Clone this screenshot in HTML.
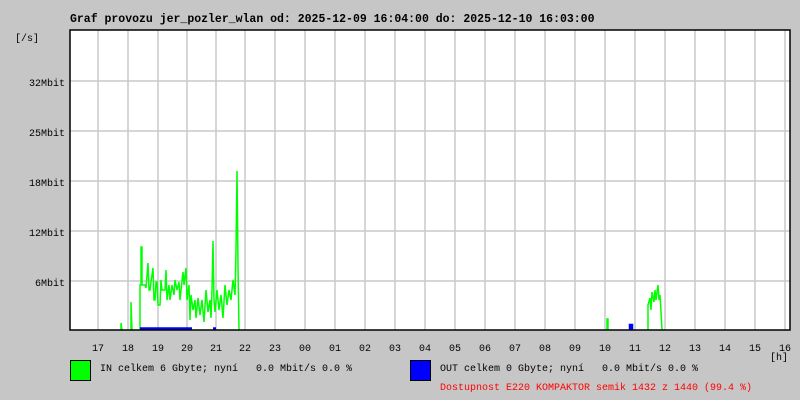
<!DOCTYPE html>
<html><head><meta charset="utf-8"><style>
body{margin:0;background:#c6c6c6;width:800px;height:400px;overflow:hidden;font-family:"Liberation Mono",monospace;}
text{white-space:pre;}
</style></head><body>
<svg width="800" height="400" xmlns="http://www.w3.org/2000/svg" style="position:absolute;left:0;top:0" font-family="Liberation Mono, monospace" font-size="10">
<rect x="70" y="30" width="720" height="300" fill="#fff"/>
<g stroke="#c8c8c8" stroke-width="1.5">
<line x1="70" y1="81" x2="790" y2="81"/><line x1="70" y1="131" x2="790" y2="131"/><line x1="70" y1="181" x2="790" y2="181"/><line x1="70" y1="231" x2="790" y2="231"/><line x1="70" y1="281" x2="790" y2="281"/>
<line x1="98" y1="30" x2="98" y2="330"/><line x1="128" y1="30" x2="128" y2="330"/><line x1="158" y1="30" x2="158" y2="330"/><line x1="187" y1="30" x2="187" y2="330"/><line x1="216" y1="30" x2="216" y2="330"/><line x1="245" y1="30" x2="245" y2="330"/><line x1="275" y1="30" x2="275" y2="330"/><line x1="305" y1="30" x2="305" y2="330"/><line x1="335" y1="30" x2="335" y2="330"/><line x1="365" y1="30" x2="365" y2="330"/><line x1="395" y1="30" x2="395" y2="330"/><line x1="425" y1="30" x2="425" y2="330"/><line x1="455" y1="30" x2="455" y2="330"/><line x1="485" y1="30" x2="485" y2="330"/><line x1="515" y1="30" x2="515" y2="330"/><line x1="545" y1="30" x2="545" y2="330"/><line x1="575" y1="30" x2="575" y2="330"/><line x1="605" y1="30" x2="605" y2="330"/><line x1="635" y1="30" x2="635" y2="330"/><line x1="665" y1="30" x2="665" y2="330"/><line x1="695" y1="30" x2="695" y2="330"/><line x1="725" y1="30" x2="725" y2="330"/><line x1="755" y1="30" x2="755" y2="330"/><line x1="785" y1="30" x2="785" y2="330"/>
</g>
<g fill="none" stroke="#00ff00" stroke-width="1.5">
<polyline points="121,330 121,323 122,330"/>
<polyline points="131,330 131,302 132,330"/>
<polyline points="140,330 140,285 141,285 141,247 142,247 142,285 145,285 146,288 148,263 149,290 150,290 151,282 153,268 154,300 155,300 156,282 157,282 158,305 160,305 161,280 162,290 165,290 166,270 167,300 169,285 170,300 172,285 174,295 175,280 177,290 179,282 180,300 183,272 184,285 186,268 187,300 189,285 190,320 191,295 193,310 195,300 196,318 198,298 200,315 202,300 204,322 206,290 208,312 210,300 211,318 212,290 213,241 214,300 215,312 217,290 219,310 221,295 223,318 225,285 227,305 229,290 231,300 233,280 235,295 236,250 237,171 238,265 239,330"/>
<polyline points="607,330 607,319 608,319 608,330"/>
<polyline points="648,330 648,305 650,298 651,310 652,292 654,302 655,290 656,300 658,285 659,300 660,295 661,312 662,330"/>
</g>
<g stroke="#0000ff" stroke-width="2.5" fill="none">
<line x1="140" y1="328.5" x2="192" y2="328.5"/>
<line x1="213" y1="328.5" x2="216" y2="328.5"/>
<polyline points="630,330 630,325 632,325 632,330"/>
</g>
<rect x="70" y="30" width="720" height="300" fill="none" stroke="#000" stroke-width="1.5"/>
<text x="70" y="22" font-weight="bold" font-size="11.5">Graf provozu jer_pozler_wlan od: 2025-12-09 16:04:00 do: 2025-12-10 16:03:00</text>
<text x="15" y="41">[/s]</text>
<g text-anchor="end"><text x="65" y="86">32Mbit</text><text x="65" y="136">25Mbit</text><text x="65" y="186">18Mbit</text><text x="65" y="236">12Mbit</text><text x="65" y="286">6Mbit</text></g>
<g text-anchor="middle"><text x="98" y="351">17</text><text x="128" y="351">18</text><text x="158" y="351">19</text><text x="187" y="351">20</text><text x="216" y="351">21</text><text x="245" y="351">22</text><text x="275" y="351">23</text><text x="305" y="351">00</text><text x="335" y="351">01</text><text x="365" y="351">02</text><text x="395" y="351">03</text><text x="425" y="351">04</text><text x="455" y="351">05</text><text x="485" y="351">06</text><text x="515" y="351">07</text><text x="545" y="351">08</text><text x="575" y="351">09</text><text x="605" y="351">10</text><text x="635" y="351">11</text><text x="665" y="351">12</text><text x="695" y="351">13</text><text x="725" y="351">14</text><text x="755" y="351">15</text><text x="785" y="351">16</text></g>
<text x="770" y="360">[h]</text>
<rect x="70.5" y="360.5" width="20" height="20" fill="#00ff00" stroke="#000"/>
<text x="100" y="371" xml:space="preserve">IN celkem 6 Gbyte; nyní   0.0 Mbit/s 0.0 %</text>
<rect x="410.5" y="360.5" width="20" height="20" fill="#0000ff" stroke="#000"/>
<text x="440" y="371" xml:space="preserve">OUT celkem 0 Gbyte; nyní   0.0 Mbit/s 0.0 %</text>
<text x="440" y="390" fill="#ff0000">Dostupnost E220 KOMPAKTOR semik 1432 z 1440 (99.4 %)</text>
</svg>
</body></html>
